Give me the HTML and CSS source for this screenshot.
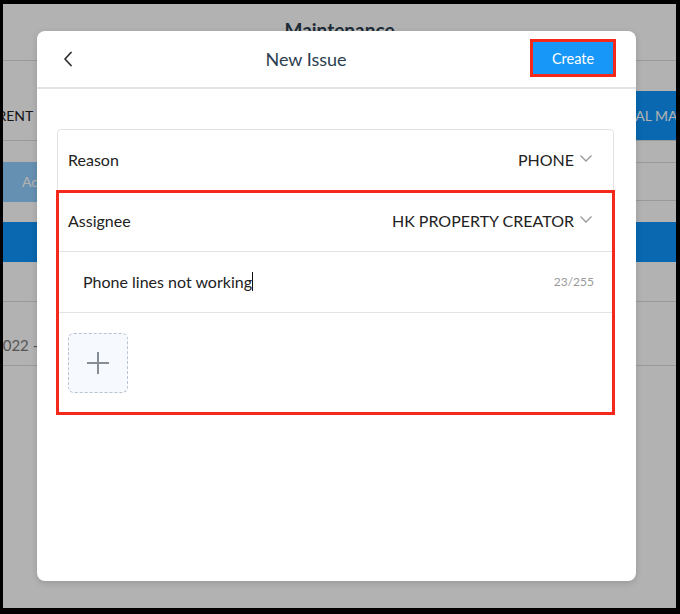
FILE: index.html
```html
<!DOCTYPE html>
<html lang="en">
<head>
  <meta charset="UTF-8">
  <meta name="viewport" content="width=device-width, initial-scale=1.0">
  <title>New Issue</title>
  <link rel="stylesheet" href="styles.css">
</head>
<body>
  <div id="screen">
    <!-- page behind the modal -->
    <div class="page">
      <header class="page-head"><h1>Maintenance</h1></header>
      <nav class="tabs">
        <div class="tab tab-first"><span>CURRENT</span></div>
        <div class="tab tab-mid"><span>HISTORY</span></div>
        <div class="tab tab-last on"><span>MANUAL MAINTENANCE</span></div>
      </nav>
      <div class="toolbar">
        <div class="add-btn">Add</div>
        <div class="search"></div>
      </div>
      <div class="table-head"></div>
      <div class="table-row"></div>
      <div class="table-row row-date"><span>2022 - 03 - 14</span></div>
    </div>
    <div class="overlay"></div>

    <div class="modal">
      <div class="modal-head">
        <div class="back">
          <svg width="10" height="16" viewBox="0 0 10 16"><polyline points="8,1.5 2,8 8,14.5" fill="none" stroke="#333" stroke-width="1.8" stroke-linecap="round" stroke-linejoin="round"/></svg>
        </div>
        <div class="modal-title">New Issue</div>
        <button class="create-btn">Create</button>
      </div>
      <div class="modal-body">
        <div class="card">
          <div class="row">
            <span class="label">Reason</span>
            <span class="value">PHONE
              <svg class="caret" width="12" height="7" viewBox="0 0 12 7"><polyline points="0.5,0.5 6,6 11.5,0.5" fill="none" stroke="#999" stroke-width="1.3"/></svg>
            </span>
          </div>
          <div class="row">
            <span class="label">Assignee</span>
            <span class="value">HK PROPERTY CREATOR
              <svg class="caret" width="12" height="7" viewBox="0 0 12 7"><polyline points="0.5,0.5 6,6 11.5,0.5" fill="none" stroke="#999" stroke-width="1.3"/></svg>
            </span>
          </div>
          <div class="row row-text">
            <span class="note">Phone lines not working<i class="cursor"></i></span>
            <span class="count">23/255</span>
          </div>
          <div class="row row-photo">
            <div class="upload">
              <svg width="24" height="24" viewBox="0 0 24 24"><path d="M12 1v22M1 12h22" stroke="#878d95" stroke-width="2" fill="none"/></svg>
            </div>
          </div>
          <div class="mark"></div>
        </div>
      </div>
    </div>
  </div>
</body>
</html>
```

FILE: styles.css
```css
*{margin: 0; padding: 0; box-sizing: border-box;}
body{
  background: #000;
  font-family: Lato, "Open Sans", sans-serif;
}
#screen{
  position: relative;
  width: 673px;
  height: 604px;
  margin: 4px 0 0 3px;
  background: #fff;
  overflow: hidden;
}

/* page behind */
.page-head{
  height: 57px;
  border-bottom: 1px solid #dbdbdb;
  text-align: center;
}
.page-head h1{
  font-size: 19px;
  font-weight: 700;
  color: #2c3e50;
  line-height: 52px;
}
.tabs{
  margin-top: 30px;
  height: 50px;
  display: flex;
  border-bottom: 1px solid #dbdbdb;
}
.tab{
  font-size: 14px;
  color: #222;
  line-height: 49px;
  overflow: hidden;
  white-space: nowrap;
}
.tab-first{width: 60px;}
.tab-first span{margin-left: -34px;}
.tab-mid{flex: 1;}
.tab-last{width: 80px; background: #0e95fb; color: #fff;}
.tab-last span{margin-left: -4px;}
.toolbar{
  height: 81px;
  display: flex;
  justify-content: space-between;
  align-items: center;
}
.add-btn{
  width: 90px;
  height: 40px;
  background: #92cefe;
  color: #fff;
  font-size: 14px;
  line-height: 40px;
  padding-left: 19px;
}
.search{
  width: 120px;
  height: 39px;
  border-top: 1px solid #dbdbdb;
  border-bottom: 1px solid #dbdbdb;
}
.table-head{
  height: 40px;
  background: #0e95fb;
}
.table-row{
  height: 40px;
  border-bottom: 1px solid #dbdbdb;
}
.row-date{
  height: 64px;
  font-size: 15px;
  color: #7a7a7a;
  padding-top: 34px;
}
.row-date span{margin-left: -9px;}
.overlay{
  position: absolute;
  left: 0;
  top: 0;
  width: 100%;
  height: 100%;
  background: rgba(0,0,0,.3);
}

/* modal */
.modal{
  position: absolute;
  left: 34px;
  top: 27px;
  width: 599px;
  height: 550px;
  background: #fff;
  border-radius: 8px;
  box-shadow: 0 2px 6px rgba(0,0,0,.15);
}
.modal-head{
  height: 58px;
  display: flex;
  align-items: center;
  padding: 0 23px 0 20px;
  border-bottom: 2px solid #e3e3e3;
}
.back{
  width: 22px;
  display: flex;
  padding: 0 0 0 6px;
}
.modal-title{
  flex: 1;
  text-align: center;
  font-size: 18px;
  color: #2c3e50;
}
.create-btn{
  width: 80px;
  height: 32px;
  border: 0;
  background: #1797f8;
  color: #fff;
  font-family: Lato, sans-serif;
  font-size: 14.5px;
  outline: 3px solid #f5291b;
  margin-top: -2px;
}
.modal-body{
  padding: 40px 22px 0 20px;
}
.card{
  position: relative;
  border: 1px solid #e3e3e3;
  border-radius: 4px;
}
.row{
  height: 61px;
  display: flex;
  align-items: center;
  justify-content: space-between;
  padding: 0 21px 2px 10px;
  border-top: 1px solid #e3e3e3;
  font-size: 16px;
  color: #222;
}
.row:first-child{border-top: 0; height: 60px;}
.value{
  display: flex;
  align-items: center;
  gap: 6px;
}
.caret{margin-top: -1px;}
.row-text{padding: 0 19px 2px 25px;}
.note{display: flex; align-items: center;}
.cursor{
  display: inline-block;
  width: 1px;
  height: 19px;
  background: #111;
}
.count{
  font-size: 12px;
  color: #999;
}
.row-photo{
  height: 100px;
  padding: 0 10px;
}
.upload{
  width: 60px;
  height: 60px;
  border: 1px dashed #b8c4d2;
  border-radius: 6px;
  background: #f6fafe;
  display: flex;
  align-items: center;
  justify-content: center;
}
.mark{
  position: absolute;
  left: -2px;
  right: -2px;
  top: 60px;
  bottom: -3px;
  border: 3px solid #f5291b;
}
```
